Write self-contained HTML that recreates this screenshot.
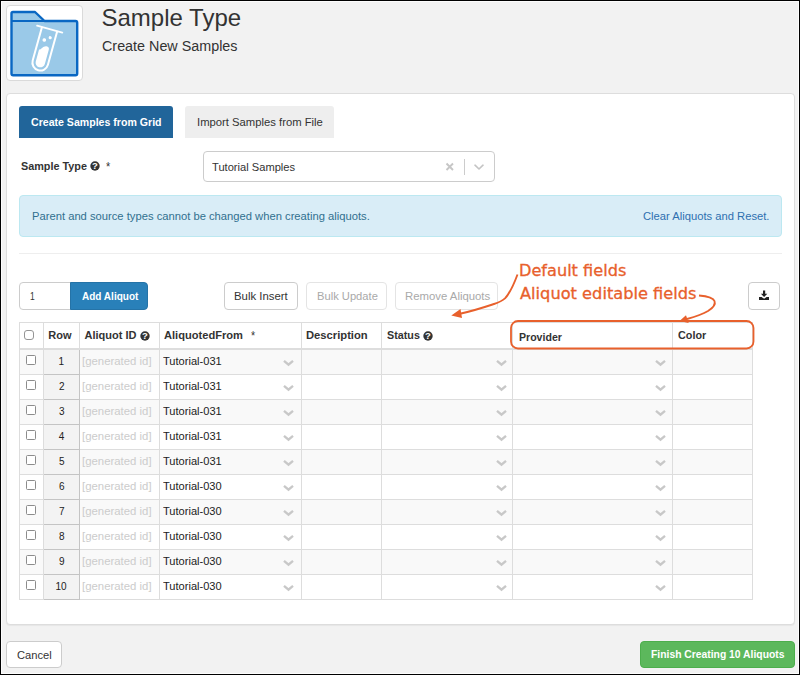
<!DOCTYPE html>
<html lang="en"><head><meta charset="utf-8"><title>Sample Type - Create New Samples</title>
<style>
*{box-sizing:border-box;margin:0;padding:0}
html,body{width:800px;height:675px;overflow:hidden;background:#f2f2f2}
body{position:relative;font-family:"Liberation Sans",sans-serif;font-size:12px;color:#333}
.abs,.row,.rn,.cb,.vl,.hl,.btn,.t{position:absolute}
.t{white-space:nowrap;line-height:normal;transform-origin:0 0;z-index:3}
#frame{position:absolute;left:0;top:0;width:800px;height:675px;border:1px solid #000;box-shadow:inset 0 0 0 1px rgba(255,255,255,.85);z-index:50;pointer-events:none}
#iconbox{left:6px;top:5px;width:77px;height:76px;background:#fff;border:1px solid #dadada;border-radius:4px}
#panel{left:6px;top:93px;width:789px;height:532px;background:#fff;border:1px solid #ddd;border-radius:4px;box-shadow:0 1px 1px rgba(0,0,0,.05)}
.tab{top:106px;height:32px;border-radius:3px 3px 0 0}
#tab1{left:19px;width:154px;background:#21659a}
#tab2{left:185px;width:149px;background:#eee}
#sel{left:203px;top:151px;width:292px;height:31px;border:1px solid #ccc;border-radius:4px;background:#fff}
#alert{left:19px;top:195px;width:763px;height:42px;background:#d9edf7;border:1px solid #bce8f1;border-radius:4px}
#hr{left:19px;top:253px;width:763px;height:1px;background:#eee}
.btn{top:282px;height:28px;border:1px solid #ccc;border-radius:4px;background:#fff}
.btn.dis{border-color:#e4e4e4}
#num{left:19px;width:52px;border-radius:4px 0 0 4px}
#add{left:70px;width:78px;background:#2980b9;border-color:#2573a7;border-radius:0 4px 4px 0}
#thead{left:19px;top:322px;width:734px;height:28px;border-top:1px solid #ddd;border-bottom:2px solid #ddd;background:#fff}
.row{left:19px;width:734px;height:24px}
.vl{top:322px;width:1px;height:278px;background:#ddd}
.hl{left:19px;width:734px;height:1px;background:#ddd}
.rn{left:44px;width:36px;height:25px;background:#f3f3f3;border-right:1px solid #c4c4c4;border-bottom:1px solid #c4c4c4;z-index:2}
.cb{width:10px;height:10px;border:1px solid #8c8c8c;border-radius:1.5px;background:#fff;z-index:3}
#cancel{left:6px;top:641px;width:56px;height:27px}
#finish{left:640px;top:641px;width:155px;height:27px;background:#5cb85c;border-color:#4cae4c}
</style></head><body>
<div class="abs" id="iconbox"></div>
<svg class="abs" style="left:0;top:0" width="90" height="86" viewBox="0 0 90 86">
<path d="M13 12 H35 L44.5 21 H75.5 Q77.2 21 77.2 22.7 V73.5 Q77.2 75.2 75.5 75.2 H13.2 Q11.5 75.2 11.5 73.5 V13.5 Q11.5 12 13 12 Z" fill="#9ac9e8" stroke="#0967c3" stroke-width="2.4" stroke-linejoin="round"/>
<path d="M11.5 21 H45" stroke="#0967c3" stroke-width="2.2" fill="none"/>
<g transform="translate(49.6 29.1) rotate(15.5)" fill="none" stroke="#fff" stroke-width="2" stroke-linecap="round">
<path d="M-13 0 H13.2" stroke-width="1.8"/>
<path d="M-7.9 0.5 V34.8 A7.9 7.9 0 0 0 7.9 34.8 V0.5"/>
<path d="M-4.7 22.5 C-2.8 22.5 -2 17.8 1.5 17.3 C3.8 17 4.7 18.3 4.7 20 V34.8 A4.7 4.7 0 0 1 -4.7 34.8 Z" fill="#fff" stroke="none"/>
<circle cx="-2.2" cy="11.9" r="1.8" fill="#fff" stroke="none"/><circle cx="2.9" cy="8.1" r="1.6" fill="#fff" stroke="none"/>
</g>
</svg>
<span class="t" style="left:101.51px;top:3.51px;font-size:24px;">Sample Type</span>
<span class="t" style="left:101.74px;top:37.64px;font-size:14px;transform:scaleX(1.0243);">Create New Samples</span>
<div class="abs" id="panel"></div>
<div class="abs tab" id="tab1"></div>
<div class="abs tab" id="tab2"></div>
<span class="t" style="left:31.01px;top:116.04px;font-size:11px;font-weight:bold;color:#fff;transform:scaleX(0.9618);">Create Samples from Grid</span>
<span class="t" style="left:196.57px;top:116.25px;font-size:11px;transform:scaleX(1.0245);">Import Samples from File</span>
<span class="t" style="left:20.51px;top:160.04px;font-size:11px;font-weight:bold;transform:scaleX(0.9844);">Sample Type</span>
<svg class="abs" style="left:89.10px;top:160.20px" width="12" height="12" viewBox="0 0 12 12"><circle cx="6" cy="6" r="4.70" fill="#333"/><text x="6" y="9.3" text-anchor="middle" font-family="Liberation Sans, sans-serif" font-weight="bold" font-size="9.5" fill="#fff">?</text></svg>
<span class="t" style="left:106.31px;top:159.81px;font-size:12px;transform:scaleX(0.9090);">*</span>
<div class="abs" id="sel"></div>
<span class="t" style="left:211.81px;top:160.75px;font-size:11px;transform:scaleX(1.0118);">Tutorial Samples</span>
<svg class="abs" style="left:445px;top:162px" width="10" height="10" viewBox="0 0 10 10"><path d="M1.5 1.5 L8 8 M8 1.5 L1.5 8" stroke="#c6c6c6" stroke-width="1.9" fill="none"/></svg>
<div class="abs" style="left:464px;top:159px;width:1px;height:16px;background:#ccc"></div>
<svg class="abs" style="left:474px;top:164px" width="10" height="7" viewBox="0 0 10 7"><path d="M1 1.2 L5 5 L9 1.2" stroke="#c4c4c4" stroke-width="1.6" fill="none" stroke-linecap="round" stroke-linejoin="round"/></svg>
<div class="abs" id="alert"></div>
<span class="t" style="left:31.65px;top:210.25px;font-size:11px;color:#31708f;transform:scaleX(1.0191);">Parent and source types cannot be changed when creating aliquots.</span>
<span class="t" style="left:643.00px;top:210.25px;font-size:11px;color:#2e70b0;transform:scaleX(1.0187);">Clear Aliquots and Reset.</span>
<div class="abs" id="hr"></div>
<div class="btn" id="num"></div>
<div class="btn" id="add"></div>
<span class="t" style="left:30.34px;top:290.25px;font-size:11px;transform:scaleX(0.7745);">1</span>
<span class="t" style="left:81.51px;top:290.04px;font-size:11px;font-weight:bold;color:#fff;transform:scaleX(0.9102);">Add Aliquot</span>
<div class="btn" style="left:224px;width:74px"></div>
<span class="t" style="left:234.14px;top:290.25px;font-size:11px;transform:scaleX(1.0335);">Bulk Insert</span>
<div class="btn dis" style="left:306px;width:81px"></div>
<span class="t" style="left:316.66px;top:290.25px;font-size:11px;color:#a9a9a9;transform:scaleX(1.0155);">Bulk Update</span>
<div class="btn dis" style="left:395px;width:103px"></div>
<span class="t" style="left:404.64px;top:290.25px;font-size:11px;color:#a9a9a9;transform:scaleX(1.0322);">Remove Aliquots</span>
<div class="btn" style="left:748px;width:32px"></div>
<svg class="abs" style="left:759px;top:290px" width="11" height="11" viewBox="0 0 11 11"><path d="M4 0.6 H6.2 V3.8 H8.3 L5.1 7 L1.9 3.8 H4 Z" fill="#222"/><path d="M0 6.9 H2.6 L5.1 8.7 L7.6 6.9 H10 V10 H0 Z" fill="#222"/></svg>
<div class="abs" id="thead"></div>
<div class="row" style="top:350px;background:#f9f9f9"></div><div class="rn" style="top:350px"></div><div class="cb" style="left:26px;top:355px"></div><span class="t" style="left:58.50px;top:356.32px;font-size:10px;color:#222;">1</span><span class="t" style="left:82.21px;top:355.25px;font-size:11px;color:#ccc;transform:scaleX(1.0341);">[generated id]</span><span class="t" style="left:162.81px;top:355.25px;font-size:11px;color:#222;transform:scaleX(1.0073);">Tutorial-031</span><svg class="abs" style="left:282.2px;top:358px" width="13" height="10" viewBox="0 0 13 10"><path d="M2 2.9 L6.5 6.6 L11 2.9" fill="none" stroke="#c8c8c8" stroke-width="2.4" stroke-linejoin="miter"/></svg><svg class="abs" style="left:494.5px;top:358px" width="13" height="10" viewBox="0 0 13 10"><path d="M2 2.9 L6.5 6.6 L11 2.9" fill="none" stroke="#c8c8c8" stroke-width="2.4" stroke-linejoin="miter"/></svg><svg class="abs" style="left:653.6px;top:358px" width="13" height="10" viewBox="0 0 13 10"><path d="M2 2.9 L6.5 6.6 L11 2.9" fill="none" stroke="#c8c8c8" stroke-width="2.4" stroke-linejoin="miter"/></svg><div class="row" style="top:375px;background:#fff"></div><div class="rn" style="top:375px"></div><div class="cb" style="left:26px;top:380px"></div><span class="t" style="left:58.92px;top:381.32px;font-size:10px;color:#222;">2</span><span class="t" style="left:82.21px;top:380.25px;font-size:11px;color:#ccc;transform:scaleX(1.0341);">[generated id]</span><span class="t" style="left:162.81px;top:380.25px;font-size:11px;color:#222;transform:scaleX(1.0073);">Tutorial-031</span><svg class="abs" style="left:282.2px;top:383px" width="13" height="10" viewBox="0 0 13 10"><path d="M2 2.9 L6.5 6.6 L11 2.9" fill="none" stroke="#c8c8c8" stroke-width="2.4" stroke-linejoin="miter"/></svg><svg class="abs" style="left:494.5px;top:383px" width="13" height="10" viewBox="0 0 13 10"><path d="M2 2.9 L6.5 6.6 L11 2.9" fill="none" stroke="#c8c8c8" stroke-width="2.4" stroke-linejoin="miter"/></svg><svg class="abs" style="left:653.6px;top:383px" width="13" height="10" viewBox="0 0 13 10"><path d="M2 2.9 L6.5 6.6 L11 2.9" fill="none" stroke="#c8c8c8" stroke-width="2.4" stroke-linejoin="miter"/></svg><div class="row" style="top:400px;background:#f9f9f9"></div><div class="rn" style="top:400px"></div><div class="cb" style="left:26px;top:405px"></div><span class="t" style="left:58.89px;top:406.32px;font-size:10px;color:#222;">3</span><span class="t" style="left:82.21px;top:405.25px;font-size:11px;color:#ccc;transform:scaleX(1.0341);">[generated id]</span><span class="t" style="left:162.81px;top:405.25px;font-size:11px;color:#222;transform:scaleX(1.0073);">Tutorial-031</span><svg class="abs" style="left:282.2px;top:408px" width="13" height="10" viewBox="0 0 13 10"><path d="M2 2.9 L6.5 6.6 L11 2.9" fill="none" stroke="#c8c8c8" stroke-width="2.4" stroke-linejoin="miter"/></svg><svg class="abs" style="left:494.5px;top:408px" width="13" height="10" viewBox="0 0 13 10"><path d="M2 2.9 L6.5 6.6 L11 2.9" fill="none" stroke="#c8c8c8" stroke-width="2.4" stroke-linejoin="miter"/></svg><svg class="abs" style="left:653.6px;top:408px" width="13" height="10" viewBox="0 0 13 10"><path d="M2 2.9 L6.5 6.6 L11 2.9" fill="none" stroke="#c8c8c8" stroke-width="2.4" stroke-linejoin="miter"/></svg><div class="row" style="top:425px;background:#fff"></div><div class="rn" style="top:425px"></div><div class="cb" style="left:26px;top:430px"></div><span class="t" style="left:58.84px;top:431.32px;font-size:10px;color:#222;">4</span><span class="t" style="left:82.21px;top:430.25px;font-size:11px;color:#ccc;transform:scaleX(1.0341);">[generated id]</span><span class="t" style="left:162.81px;top:430.25px;font-size:11px;color:#222;transform:scaleX(1.0073);">Tutorial-031</span><svg class="abs" style="left:282.2px;top:433px" width="13" height="10" viewBox="0 0 13 10"><path d="M2 2.9 L6.5 6.6 L11 2.9" fill="none" stroke="#c8c8c8" stroke-width="2.4" stroke-linejoin="miter"/></svg><svg class="abs" style="left:494.5px;top:433px" width="13" height="10" viewBox="0 0 13 10"><path d="M2 2.9 L6.5 6.6 L11 2.9" fill="none" stroke="#c8c8c8" stroke-width="2.4" stroke-linejoin="miter"/></svg><svg class="abs" style="left:653.6px;top:433px" width="13" height="10" viewBox="0 0 13 10"><path d="M2 2.9 L6.5 6.6 L11 2.9" fill="none" stroke="#c8c8c8" stroke-width="2.4" stroke-linejoin="miter"/></svg><div class="row" style="top:450px;background:#f9f9f9"></div><div class="rn" style="top:450px"></div><div class="cb" style="left:26px;top:455px"></div><span class="t" style="left:58.88px;top:456.32px;font-size:10px;color:#222;">5</span><span class="t" style="left:82.21px;top:455.25px;font-size:11px;color:#ccc;transform:scaleX(1.0341);">[generated id]</span><span class="t" style="left:162.81px;top:455.25px;font-size:11px;color:#222;transform:scaleX(1.0073);">Tutorial-031</span><svg class="abs" style="left:282.2px;top:458px" width="13" height="10" viewBox="0 0 13 10"><path d="M2 2.9 L6.5 6.6 L11 2.9" fill="none" stroke="#c8c8c8" stroke-width="2.4" stroke-linejoin="miter"/></svg><svg class="abs" style="left:494.5px;top:458px" width="13" height="10" viewBox="0 0 13 10"><path d="M2 2.9 L6.5 6.6 L11 2.9" fill="none" stroke="#c8c8c8" stroke-width="2.4" stroke-linejoin="miter"/></svg><svg class="abs" style="left:653.6px;top:458px" width="13" height="10" viewBox="0 0 13 10"><path d="M2 2.9 L6.5 6.6 L11 2.9" fill="none" stroke="#c8c8c8" stroke-width="2.4" stroke-linejoin="miter"/></svg><div class="row" style="top:475px;background:#fff"></div><div class="rn" style="top:475px"></div><div class="cb" style="left:26px;top:480px"></div><span class="t" style="left:58.89px;top:481.32px;font-size:10px;color:#222;">6</span><span class="t" style="left:82.21px;top:480.25px;font-size:11px;color:#ccc;transform:scaleX(1.0341);">[generated id]</span><span class="t" style="left:162.81px;top:480.25px;font-size:11px;color:#222;transform:scaleX(1.0064);">Tutorial-030</span><svg class="abs" style="left:282.2px;top:483px" width="13" height="10" viewBox="0 0 13 10"><path d="M2 2.9 L6.5 6.6 L11 2.9" fill="none" stroke="#c8c8c8" stroke-width="2.4" stroke-linejoin="miter"/></svg><svg class="abs" style="left:494.5px;top:483px" width="13" height="10" viewBox="0 0 13 10"><path d="M2 2.9 L6.5 6.6 L11 2.9" fill="none" stroke="#c8c8c8" stroke-width="2.4" stroke-linejoin="miter"/></svg><svg class="abs" style="left:653.6px;top:483px" width="13" height="10" viewBox="0 0 13 10"><path d="M2 2.9 L6.5 6.6 L11 2.9" fill="none" stroke="#c8c8c8" stroke-width="2.4" stroke-linejoin="miter"/></svg><div class="row" style="top:500px;background:#f9f9f9"></div><div class="rn" style="top:500px"></div><div class="cb" style="left:26px;top:505px"></div><span class="t" style="left:58.90px;top:506.32px;font-size:10px;color:#222;">7</span><span class="t" style="left:82.21px;top:505.25px;font-size:11px;color:#ccc;transform:scaleX(1.0341);">[generated id]</span><span class="t" style="left:162.81px;top:505.25px;font-size:11px;color:#222;transform:scaleX(1.0064);">Tutorial-030</span><svg class="abs" style="left:282.2px;top:508px" width="13" height="10" viewBox="0 0 13 10"><path d="M2 2.9 L6.5 6.6 L11 2.9" fill="none" stroke="#c8c8c8" stroke-width="2.4" stroke-linejoin="miter"/></svg><svg class="abs" style="left:494.5px;top:508px" width="13" height="10" viewBox="0 0 13 10"><path d="M2 2.9 L6.5 6.6 L11 2.9" fill="none" stroke="#c8c8c8" stroke-width="2.4" stroke-linejoin="miter"/></svg><svg class="abs" style="left:653.6px;top:508px" width="13" height="10" viewBox="0 0 13 10"><path d="M2 2.9 L6.5 6.6 L11 2.9" fill="none" stroke="#c8c8c8" stroke-width="2.4" stroke-linejoin="miter"/></svg><div class="row" style="top:525px;background:#fff"></div><div class="rn" style="top:525px"></div><div class="cb" style="left:26px;top:530px"></div><span class="t" style="left:58.90px;top:531.32px;font-size:10px;color:#222;">8</span><span class="t" style="left:82.21px;top:530.25px;font-size:11px;color:#ccc;transform:scaleX(1.0341);">[generated id]</span><span class="t" style="left:162.81px;top:530.25px;font-size:11px;color:#222;transform:scaleX(1.0064);">Tutorial-030</span><svg class="abs" style="left:282.2px;top:533px" width="13" height="10" viewBox="0 0 13 10"><path d="M2 2.9 L6.5 6.6 L11 2.9" fill="none" stroke="#c8c8c8" stroke-width="2.4" stroke-linejoin="miter"/></svg><svg class="abs" style="left:494.5px;top:533px" width="13" height="10" viewBox="0 0 13 10"><path d="M2 2.9 L6.5 6.6 L11 2.9" fill="none" stroke="#c8c8c8" stroke-width="2.4" stroke-linejoin="miter"/></svg><svg class="abs" style="left:653.6px;top:533px" width="13" height="10" viewBox="0 0 13 10"><path d="M2 2.9 L6.5 6.6 L11 2.9" fill="none" stroke="#c8c8c8" stroke-width="2.4" stroke-linejoin="miter"/></svg><div class="row" style="top:550px;background:#f9f9f9"></div><div class="rn" style="top:550px"></div><div class="cb" style="left:26px;top:555px"></div><span class="t" style="left:58.89px;top:556.32px;font-size:10px;color:#222;">9</span><span class="t" style="left:82.21px;top:555.25px;font-size:11px;color:#ccc;transform:scaleX(1.0341);">[generated id]</span><span class="t" style="left:162.81px;top:555.25px;font-size:11px;color:#222;transform:scaleX(1.0064);">Tutorial-030</span><svg class="abs" style="left:282.2px;top:558px" width="13" height="10" viewBox="0 0 13 10"><path d="M2 2.9 L6.5 6.6 L11 2.9" fill="none" stroke="#c8c8c8" stroke-width="2.4" stroke-linejoin="miter"/></svg><svg class="abs" style="left:494.5px;top:558px" width="13" height="10" viewBox="0 0 13 10"><path d="M2 2.9 L6.5 6.6 L11 2.9" fill="none" stroke="#c8c8c8" stroke-width="2.4" stroke-linejoin="miter"/></svg><svg class="abs" style="left:653.6px;top:558px" width="13" height="10" viewBox="0 0 13 10"><path d="M2 2.9 L6.5 6.6 L11 2.9" fill="none" stroke="#c8c8c8" stroke-width="2.4" stroke-linejoin="miter"/></svg><div class="row" style="top:575px;background:#fff"></div><div class="rn" style="top:575px"></div><div class="cb" style="left:26px;top:580px"></div><span class="t" style="left:55.57px;top:581.32px;font-size:10px;color:#222;">10</span><span class="t" style="left:82.21px;top:580.25px;font-size:11px;color:#ccc;transform:scaleX(1.0341);">[generated id]</span><span class="t" style="left:162.81px;top:580.25px;font-size:11px;color:#222;transform:scaleX(1.0064);">Tutorial-030</span><svg class="abs" style="left:282.2px;top:583px" width="13" height="10" viewBox="0 0 13 10"><path d="M2 2.9 L6.5 6.6 L11 2.9" fill="none" stroke="#c8c8c8" stroke-width="2.4" stroke-linejoin="miter"/></svg><svg class="abs" style="left:494.5px;top:583px" width="13" height="10" viewBox="0 0 13 10"><path d="M2 2.9 L6.5 6.6 L11 2.9" fill="none" stroke="#c8c8c8" stroke-width="2.4" stroke-linejoin="miter"/></svg><svg class="abs" style="left:653.6px;top:583px" width="13" height="10" viewBox="0 0 13 10"><path d="M2 2.9 L6.5 6.6 L11 2.9" fill="none" stroke="#c8c8c8" stroke-width="2.4" stroke-linejoin="miter"/></svg>
<div class="vl" style="left:19px"></div><div class="vl" style="left:43px"></div><div class="vl" style="left:79px"></div><div class="vl" style="left:159px"></div><div class="vl" style="left:301px"></div><div class="vl" style="left:381px"></div><div class="vl" style="left:512px"></div><div class="vl" style="left:672px"></div><div class="vl" style="left:752px"></div>
<div class="hl" style="top:374px"></div><div class="hl" style="top:399px"></div><div class="hl" style="top:424px"></div><div class="hl" style="top:449px"></div><div class="hl" style="top:474px"></div><div class="hl" style="top:499px"></div><div class="hl" style="top:524px"></div><div class="hl" style="top:549px"></div><div class="hl" style="top:574px"></div><div class="hl" style="top:599px"></div>
<div class="cb" style="left:24px;top:330px;border-radius:3px;border-color:#959595"></div>
<span class="t" style="left:48.27px;top:329.04px;font-size:11px;font-weight:bold;">Row</span>
<span class="t" style="left:84.51px;top:329.04px;font-size:11px;font-weight:bold;">Aliquot ID</span>
<svg class="abs" style="left:138.80px;top:329.80px" width="12" height="12" viewBox="0 0 12 12"><circle cx="6" cy="6" r="4.70" fill="#333"/><text x="6" y="9.3" text-anchor="middle" font-family="Liberation Sans, sans-serif" font-weight="bold" font-size="9.5" fill="#fff">?</text></svg>
<span class="t" style="left:164.41px;top:328.84px;font-size:11px;font-weight:bold;transform:scaleX(1.0098);">AliquotedFrom</span>
<span class="t" style="left:250.61px;top:328.81px;font-size:12px;transform:scaleX(0.8857);">*</span>
<span class="t" style="left:305.75px;top:329.04px;font-size:11px;font-weight:bold;transform:scaleX(1.0195);">Description</span>
<span class="t" style="left:387.01px;top:329.04px;font-size:11px;font-weight:bold;transform:scaleX(0.9773);">Status</span>
<svg class="abs" style="left:421.80px;top:329.80px" width="12" height="12" viewBox="0 0 12 12"><circle cx="6" cy="6" r="4.70" fill="#333"/><text x="6" y="9.3" text-anchor="middle" font-family="Liberation Sans, sans-serif" font-weight="bold" font-size="9.5" fill="#fff">?</text></svg>
<span class="t" style="left:677.51px;top:329.04px;font-size:11px;font-weight:bold;transform:scaleX(0.9816);">Color</span>
<svg class="abs" style="left:440px;top:255px;z-index:5" width="330" height="100" viewBox="440 255 330 100">
<rect x="511" y="321" width="242.5" height="27.5" rx="7" ry="7" fill="none" stroke="#e8602c" stroke-width="1.8"/>
<path d="M517.5 274.5 C514 284 510 293 505 298.4 C501 302 497 303 492.5 304.5 C482 308 470 311.5 460 313.8" fill="none" stroke="#e8602c" stroke-width="1.9"/>
<path d="M451.3 315.5 L460.5 309 L462 318 Z" fill="#e8602c"/>
<path d="M699 295.5 C705 296 713 297 714.5 301 C716 305 712 308.5 708 311 C702 314.5 694 317 687 319" fill="none" stroke="#e8602c" stroke-width="1.9"/>
<path d="M679.5 321 L686 315.3 L688.7 323 Z" fill="#e8602c"/>
</svg>
<span class="t" style="left:518.90px;top:330.84px;font-size:11px;font-weight:bold;transform:scaleX(0.9609);z-index:6;">Provider</span>
<span class="t" style="left:518.96px;top:261.55px;font-size:15.5px;color:#e8602c;font-family:&quot;DejaVu Sans&quot;,sans-serif;transform:scaleX(1.0408);z-index:6;-webkit-text-stroke:0.3px #e8602c;">Default fields</span>
<span class="t" style="left:520.03px;top:285.05px;font-size:15.5px;color:#e8602c;font-family:&quot;DejaVu Sans&quot;,sans-serif;transform:scaleX(1.0463);z-index:6;-webkit-text-stroke:0.3px #e8602c;">Aliquot editable fields</span>
<div class="btn" id="cancel"></div>
<span class="t" style="left:17.00px;top:648.75px;font-size:11px;transform:scaleX(1.0144);">Cancel</span>
<div class="btn" id="finish"></div>
<span class="t" style="left:650.81px;top:648.44px;font-size:11px;font-weight:bold;color:#fff;transform:scaleX(0.9399);">Finish Creating 10 Aliquots</span>
<div id="frame"></div>
</body></html>
